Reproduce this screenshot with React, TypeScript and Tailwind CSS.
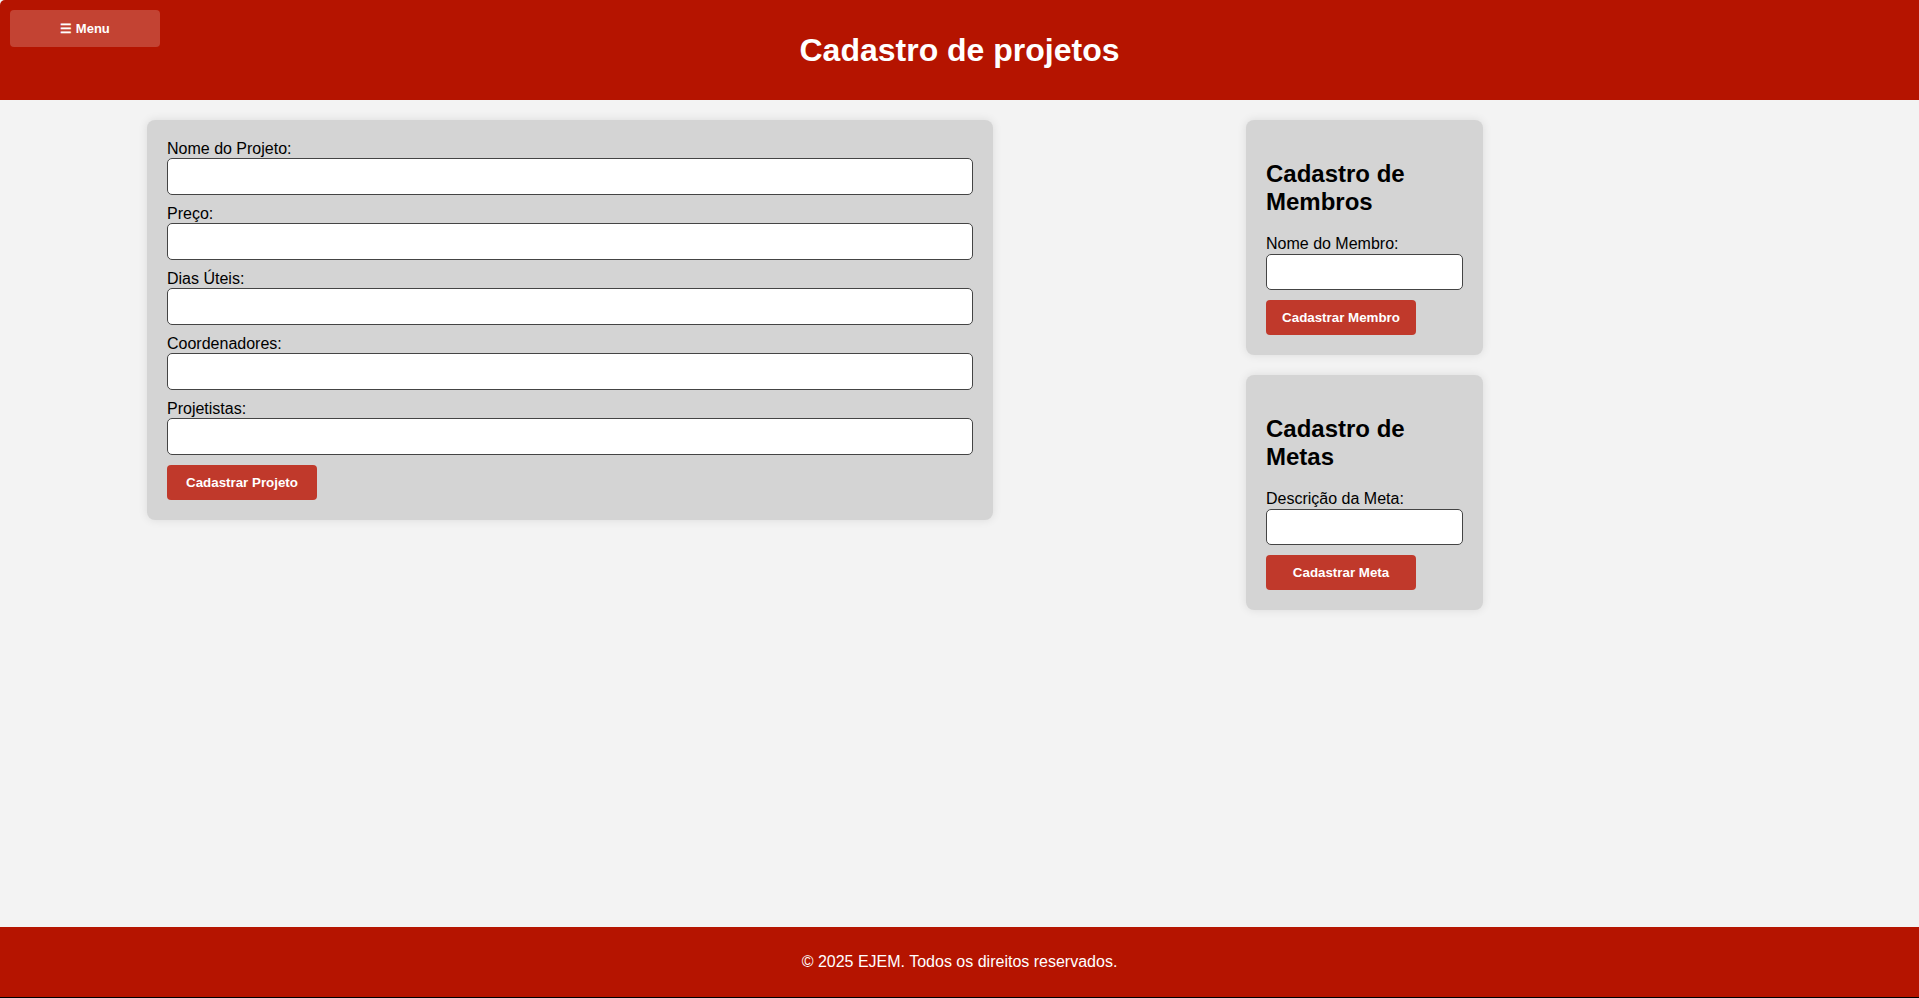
const font = { fontFamily: '"Liberation Sans", Arial, sans-serif' };

function Field({ label }: { label: string }) {
  return (
    <div className="flex flex-col">
      <label className="block text-[16px] leading-[18.4px] text-black">{label}</label>
      <input
        type="text"
        className="mb-[10px] h-[36.6px] w-full rounded-[5px] border border-[#444] bg-white px-2 text-[16px] outline-none"
      />
    </div>
  );
}

function RedButton({ children }: { children: React.ReactNode }) {
  return (
    <button className="h-[35px] w-[150px] rounded-[4px] bg-[#c0392b] text-[13.33px] font-bold text-white">
      {children}
    </button>
  );
}

function SideCard({ title, label, button }: { title: string; label: string; button: string }) {
  return (
    <div className="rounded-[8px] bg-[#d4d4d4] p-5 shadow-[0_0_10px_rgba(0,0,0,0.1)]">
      <h2 className="my-5 text-[24px] leading-[27.6px] font-bold text-black">{title}</h2>
      <Field label={label} />
      <RedButton>{button}</RedButton>
    </div>
  );
}

export default function App() {
  return (
    <div className="flex min-h-[998px] flex-col bg-[#f3f3f3]" style={font}>
      <header className="relative flex h-[100px] items-center justify-center rounded-tl-[5px] bg-[#b51400]">
        <button className="absolute left-[10px] top-[10px] flex h-[37px] w-[150px] items-center justify-center rounded-[4px] bg-white/20 text-[13px] font-bold text-white">
          ☰ Menu
        </button>
        <h1 className="text-[32px] leading-[37px] font-bold text-white">Cadastro de projetos</h1>
      </header>

      <main className="flex flex-1 items-start gap-[253px] pl-[147px] pt-5">
        <div className="w-[846px] rounded-[8px] bg-[#d4d4d4] p-5 shadow-[0_0_10px_rgba(0,0,0,0.1)]">
          <Field label="Nome do Projeto:" />
          <Field label="Preço:" />
          <Field label="Dias Úteis:" />
          <Field label="Coordenadores:" />
          <Field label="Projetistas:" />
          <RedButton>Cadastrar Projeto</RedButton>
        </div>

        <div className="flex w-[237px] flex-col gap-5">
          <SideCard title="Cadastro de Membros" label="Nome do Membro:" button="Cadastrar Membro" />
          <SideCard title="Cadastro de Metas" label="Descrição da Meta:" button="Cadastrar Meta" />
        </div>
      </main>

      <footer className="flex h-[71px] items-center justify-center border-b border-black bg-[#b51400] text-[16px] text-white">
        © 2025 EJEM. Todos os direitos reservados.
      </footer>
    </div>
  );
}
